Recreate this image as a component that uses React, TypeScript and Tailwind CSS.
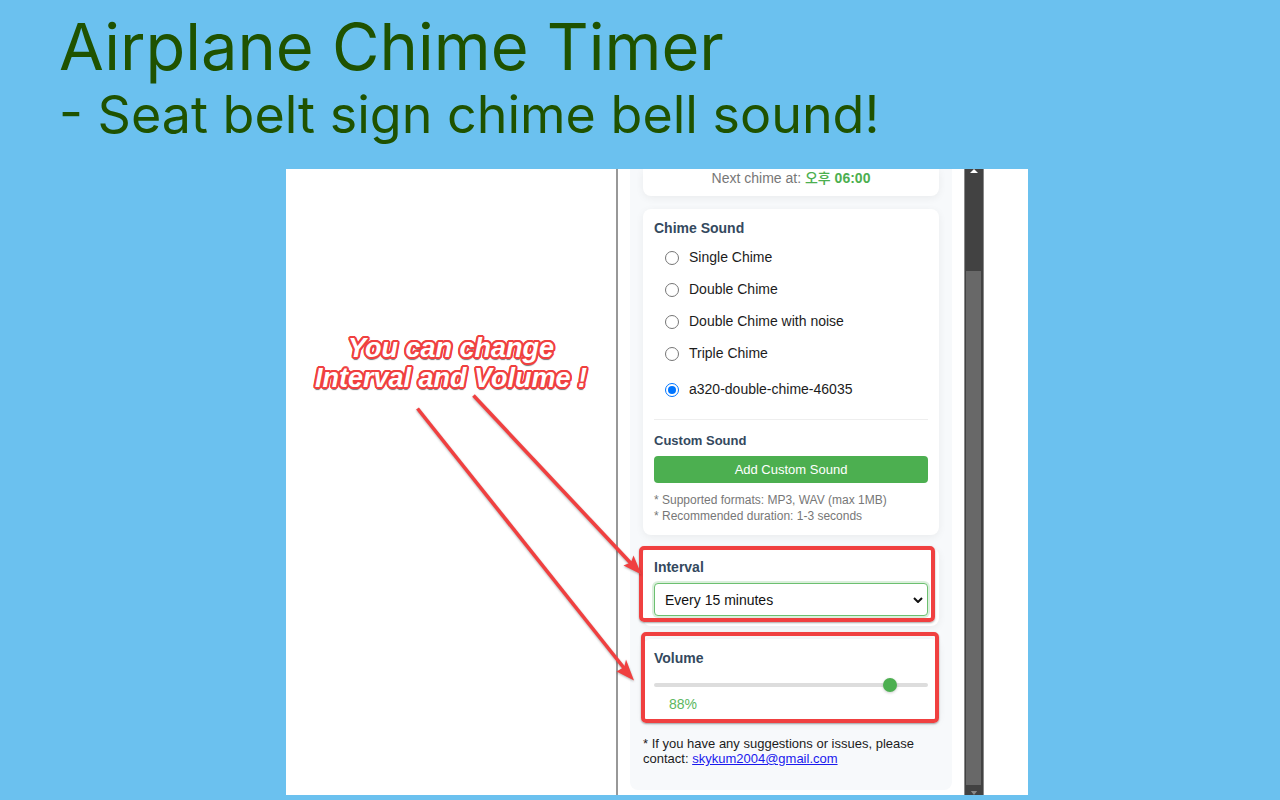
import { useState, type ReactNode } from "react";

const chimes = [
  { id: "single", label: "Single Chime" },
  { id: "double", label: "Double Chime" },
  { id: "noise", label: "Double Chime with noise" },
  { id: "triple", label: "Triple Chime" },
];

const customChimes = [{ id: "a320", label: "a320-double-chime-46035" }];

function Card({ children, className }: { children: ReactNode; className: string }) {
  return (
    <section className={`relative rounded-lg bg-white px-[11px] shadow-[0_2px_8px_rgba(0,0,0,0.06)] ${className}`}>
      {children}
    </section>
  );
}

function ChimeOption(props: { id: string; label: string; checked: boolean; onSelect: () => void }) {
  return (
    <label className="flex h-8 items-center pl-[11px] text-sm text-[#1c1c1c]">
      <input
        type="radio"
        name="chime"
        checked={props.checked}
        onChange={props.onSelect}
        className="mt-[2px] mr-[10px] grid size-[14px] shrink-0 appearance-none place-items-center rounded-full border border-[#767676] bg-white before:size-2 before:rounded-full checked:border-[#0075ff] checked:before:bg-[#0075ff]"
      />
      {props.label}
    </label>
  );
}

function Highlight({ className }: { className: string }) {
  return (
    <div
      aria-hidden="true"
      className={`pointer-events-none absolute z-10 rounded-[5px] border-4 border-[#f04040] shadow-[0_1px_2px_rgba(0,0,0,0.35)] ${className}`}
    />
  );
}

function Arrows() {
  return (
    <svg
      aria-hidden="true"
      viewBox="0 0 742 626"
      className="pointer-events-none absolute top-0 left-0 z-20 h-[626px] w-[742px] drop-shadow-[0_1px_1px_rgba(0,0,0,0.3)]"
    >
      <g stroke="#f04040" strokeWidth="3.6" fill="none">
        <path d="M187.500 226.500 L347 396.500" />
        <path d="M131.500 239.500 L340 501.500" />
      </g>
      <g fill="#f04040">
        <path d="M355.500 405.500 L337.500 396.500 L343.500 394 L345.500 392 L347.500 386.500 Z" />
        <path d="M348 511.500 L330.500 502.500 L336.500 499 L338.500 497 L340 490.500 Z" />
      </g>
    </svg>
  );
}

export default function App() {
  const [selected, setSelected] = useState("a320");
  const [volume, setVolume] = useState(88);

  return (
    <div className="min-h-screen bg-[#6bc1ef] pb-[5px] font-['Liberation_Sans','Noto_Sans_CJK_KR',sans-serif]">
      <header className="px-[59px] pt-[10px] pb-[23px] font-['Inter',sans-serif] text-[#1f5200]">
        <h1 className="text-[65px] leading-[74px]">Airplane Chime Timer</h1>
        <p className="text-[52px] leading-[62px]">- Seat belt sign chime bell sound!</p>
      </header>

      <div className="pl-[34px]">
        <main className="relative mx-auto flex max-w-[742px] overflow-hidden bg-white">
          <Arrows />
          <div className="flex-1 pt-[164px] text-center">
            <p className="text-[27px] leading-[30px] font-bold text-white italic [text-shadow:2px_0_#f04040,-2px_0_#f04040,0_2px_#f04040,0_-2px_#f04040,2px_1px_#f04040,-2px_1px_#f04040,2px_-1px_#f04040,-2px_-1px_#f04040,1px_2px_#f04040,-1px_2px_#f04040,1px_-2px_#f04040,-1px_-2px_#f04040,0_3px_1px_rgba(60,60,60,0.7)]">
              You can change
              <br />
              Interval and Volume !
            </p>
          </div>

          <div className="flex border-l-2 border-[#989898] pl-3">
            <div className="mb-[5px] w-[322px] rounded-b-lg bg-[#f7f9fb] px-[13px] pb-6">
              <Card className="rounded-t-none pb-[9px]">
                <p className="text-center text-sm leading-[18px] text-[#777777]">
                  Next chime at: <strong className="text-[#4caf50]"><span className="font-medium">오후</span> 06:00</strong>
                </p>
              </Card>

              <Card className="mt-[13px] pt-[10px] pb-[11px]">
                <h2 className="text-sm leading-[18px] font-bold text-[#34495e]">Chime Sound</h2>
                <div className="mt-1">
                  {chimes.map((c) => (
                    <ChimeOption key={c.id} {...c} checked={selected === c.id} onSelect={() => setSelected(c.id)} />
                  ))}
                </div>
                <div className="mt-1">
                  {customChimes.map((c) => (
                    <ChimeOption key={c.id} {...c} checked={selected === c.id} onSelect={() => setSelected(c.id)} />
                  ))}
                </div>
                <div className="mt-[14px] border-t border-[#eeeeee] pt-3">
                  <h3 className="text-[13px] leading-[18px] font-bold text-[#34495e]">Custom Sound</h3>
                  <button type="button" className="mt-[6px] h-[27px] w-full rounded-[4px] bg-[#4caf50] text-[13px] text-white">
                    Add Custom Sound
                  </button>
                  <p className="mt-[9px] text-xs leading-4 text-[#777777]">
                    * Supported formats: MP3, WAV (max 1MB)
                    <br />* Recommended duration: 1-3 seconds
                  </p>
                </div>
              </Card>

              <Card className="mt-[13px] pt-[10px] pb-[10px]">
                <Highlight className="-top-[2px] right-[4px] bottom-[4px] -left-[4px]" />
                <label htmlFor="interval" className="block text-sm leading-[18px] font-bold text-[#34495e]">
                  Interval
                </label>
                <div className="relative mt-[7px]">
                  <select
                    id="interval"
                    defaultValue="15"
                    className="block h-[33px] w-full appearance-none rounded-[4px] border border-[#6cc070] bg-white pl-[10px] text-sm text-[#111111] shadow-[0_0_0_2px_rgba(76,175,80,0.2)]"
                  >
                    <option value="15">Every 15 minutes</option>
                    <option value="30">Every 30 minutes</option>
                    <option value="60">Every 60 minutes</option>
                  </select>
                  <svg aria-hidden="true" viewBox="0 0 10 6" className="pointer-events-none absolute top-[14px] right-[5px] h-[6px] w-[10px]">
                    <path d="M1 1 L5 5 L9 1" fill="none" stroke="#111111" strokeWidth="2" />
                  </svg>
                </div>
              </Card>

              <Card className="mt-[13px] pt-[10px] pb-[9px]">
                <Highlight className="-top-[7px] right-0 -bottom-[1px] -left-[2px]" />
                <label htmlFor="volume" className="block text-sm leading-[18px] font-bold text-[#34495e]">
                  Volume
                </label>
                <input
                  id="volume"
                  type="range"
                  min={0}
                  max={100}
                  value={volume}
                  onChange={(e) => setVolume(Number(e.target.value))}
                  className="mt-[10px] block h-[15px] w-full appearance-none bg-transparent [&::-webkit-slider-runnable-track]:h-1 [&::-webkit-slider-runnable-track]:rounded-full [&::-webkit-slider-runnable-track]:bg-[#dddddd] [&::-webkit-slider-thumb]:-mt-[5px] [&::-webkit-slider-thumb]:size-[14px] [&::-webkit-slider-thumb]:appearance-none [&::-webkit-slider-thumb]:rounded-full [&::-webkit-slider-thumb]:bg-[#4caf50] [&::-webkit-slider-thumb]:shadow-[0_1px_3px_rgba(0,0,0,0.2)]"
                />
                <output htmlFor="volume" className="mt-[3px] block pl-[15px] text-sm leading-[18px] text-[#5cb760]">
                  {volume}%
                </output>
              </Card>

              <p className="mt-[14px] text-[13px] leading-[15px] text-[#1c1c1c]">
                * If you have any suggestions or issues, please contact:{" "}
                <a href="mailto:skykum2004@gmail.com" className="text-[#1a1aee] underline">
                  skykum2004@gmail.com
                </a>
              </p>
            </div>
          </div>

          <div aria-hidden="true" className="mr-11 ml-3 flex w-5 flex-col items-center border-x border-[#888888] bg-[#424242] pr-px">
            <svg viewBox="0 0 8 5" className="h-[5px] w-2">
              <path d="M4 0 L8 4 H0 Z" fill="#ffffff" />
            </svg>
            <div className="mt-[97px] w-[15px] flex-1 bg-[#686868]" />
            <svg viewBox="0 0 8 5" className="mt-[6px] h-[4px] w-2">
              <path d="M0 0 H8 L4 5 Z" fill="#888888" />
            </svg>
          </div>
        </main>
      </div>
    </div>
  );
}
